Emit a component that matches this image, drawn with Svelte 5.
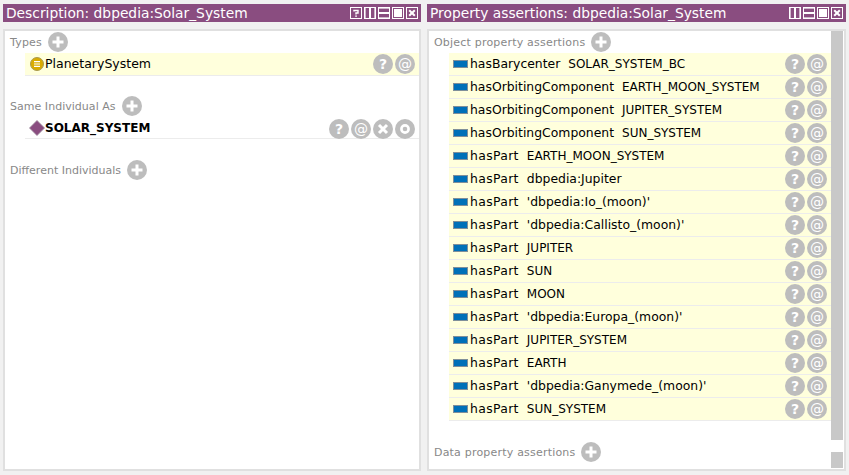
<script lang="ts">
	type Row = { prop: string; value: string };

	const rows: Row[] = [
		{ prop: 'hasBarycenter', value: 'SOLAR_SYSTEM_BC' },
		{ prop: 'hasOrbitingComponent', value: 'EARTH_MOON_SYSTEM' },
		{ prop: 'hasOrbitingComponent', value: 'JUPITER_SYSTEM' },
		{ prop: 'hasOrbitingComponent', value: 'SUN_SYSTEM' },
		{ prop: 'hasPart', value: 'EARTH_MOON_SYSTEM' },
		{ prop: 'hasPart', value: 'dbpedia:Jupiter' },
		{ prop: 'hasPart', value: "'dbpedia:Io_(moon)'" },
		{ prop: 'hasPart', value: "'dbpedia:Callisto_(moon)'" },
		{ prop: 'hasPart', value: 'JUPITER' },
		{ prop: 'hasPart', value: 'SUN' },
		{ prop: 'hasPart', value: 'MOON' },
		{ prop: 'hasPart', value: "'dbpedia:Europa_(moon)'" },
		{ prop: 'hasPart', value: 'JUPITER_SYSTEM' },
		{ prop: 'hasPart', value: 'EARTH' },
		{ prop: 'hasPart', value: "'dbpedia:Ganymede_(moon)'" },
		{ prop: 'hasPart', value: 'SUN_SYSTEM' }
	];

	const isMixed = (v: string) => v.includes('dbpedia');
</script>

{#snippet plus()}
	<span class="btn">
		<svg viewBox="0 0 20 20" width="20" height="20"><path d="M10 4.5v11M4.5 10h11" stroke="#fff" stroke-width="3" /></svg>
	</span>
{/snippet}

{#snippet q()}
	<span class="btn q">?</span>
{/snippet}

{#snippet at()}
	<span class="btn at">@</span>
{/snippet}

{#snippet winBtn(kind: string)}
	<svg class="win" viewBox="0 0 12 12" width="12" height="12">
		<rect x="0.5" y="0.5" width="11" height="11" fill="none" stroke="#fff" />
		{#if kind === 'help'}
			<path d="M4 4.5V3.5h4v2.5H6V7.5" fill="none" stroke="#fff" stroke-width="1.4" />
			<rect x="5.3" y="8.4" width="1.5" height="1.5" fill="#fff" />
		{:else if kind === 'vsplit'}
			<rect x="5" y="1" width="2" height="10" fill="#fff" />
			<rect x="1" y="1" width="1" height="10" fill="#fff" opacity="0.6" />
			<rect x="10" y="1" width="1" height="10" fill="#fff" opacity="0.6" />
		{:else if kind === 'hsplit'}
			<rect x="1" y="5" width="10" height="2" fill="#fff" />
			<rect x="1" y="1" width="10" height="1" fill="#fff" opacity="0.6" />
			<rect x="1" y="10" width="10" height="1" fill="#fff" opacity="0.6" />
		{:else if kind === 'max'}
			<rect x="2" y="2" width="8" height="8" fill="#fff" />
		{:else}
			<path d="M3.2 3.2l5.6 5.6M8.8 3.2l-5.6 5.6" stroke="#fff" stroke-width="2" />
		{/if}
	</svg>
{/snippet}

<div class="page">
	<section class="view desc">
		<header class="title">
			<span class="title-text">Description: dbpedia:Solar_System</span>
			<div class="win-btns">
				{@render winBtn('help')}
				{@render winBtn('vsplit')}
				{@render winBtn('hsplit')}
				{@render winBtn('max')}
				{@render winBtn('close')}
			</div>
		</header>
		<div class="panel left">
			<div class="section-head">Types {@render plus()}</div>
			<div class="row type-row">
				<svg class="class-icon" viewBox="0 0 14 14" width="14" height="14">
					<circle cx="7" cy="7" r="6.5" fill="#d9ab00" stroke="#a89a50" />
					<path d="M4 4.6h6M4 7h6M4 9.4h6" stroke="#fff" stroke-width="1.2" />
				</svg>
				<span class="name type-name">PlanetarySystem</span>
				<div class="actions">{@render q()}{@render at()}</div>
			</div>

			<div class="section-head same">Same Individual As {@render plus()}</div>
			<div class="row same-row">
				<svg class="diamond" viewBox="0 0 16 16" width="16" height="16">
					<path d="M8 .5L15.5 8 8 15.5.5 8z" fill="#8a4d80" stroke="#9b8598" stroke-width="0.8" />
				</svg>
				<span class="name strong">SOLAR_SYSTEM</span>
				<div class="actions">
					{@render q()}{@render at()}
					<span class="btn">
						<svg viewBox="0 0 20 20" width="20" height="20"><path d="M6 6l8 8M14 6l-8 8" stroke="#fff" stroke-width="3" /></svg>
					</span>
					<span class="btn">
						<svg viewBox="0 0 20 20" width="20" height="20"><circle cx="10" cy="10" r="3.6" fill="none" stroke="#fff" stroke-width="2.6" /></svg>
					</span>
				</div>
			</div>

			<div class="section-head different">Different Individuals {@render plus()}</div>
		</div>
	</section>

	<section class="view assertions">
		<header class="title">
			<span class="title-text">Property assertions: dbpedia:Solar_System</span>
			<div class="win-btns">
				{@render winBtn('vsplit')}
				{@render winBtn('hsplit')}
				{@render winBtn('max')}
				{@render winBtn('close')}
			</div>
		</header>
		<div class="panel right">
			<div class="scroll-content">
				<div class="section-head">Object property assertions {@render plus()}</div>
				<div class="list">
					{#each rows as r}
						<div class="row prop-row">
							<span class="prop-icon"></span>
							<span class="name prop" class:short={r.prop === 'hasPart'}>{r.prop}</span>
							<span class="name value" class:mixed={isMixed(r.value)}>{r.value}</span>
							<div class="actions">{@render q()}{@render at()}</div>
						</div>
					{/each}
				</div>
				<div class="section-head data">Data property assertions {@render plus()}</div>
			</div>
			<div class="scrollbar">
				<div class="thumb main"></div>
				<div class="thumb end"></div>
			</div>
		</div>
	</section>
</div>

<style>
	:global(body) {
		margin: 0;
		background: #f1f1f1;
	}

	.page {
		width: 849px;
		height: 475px;
		box-sizing: border-box;
		padding: 4px 3px;
		display: flex;
		gap: 6px;
		font-family: 'DejaVu Sans', sans-serif;
		overflow: hidden;
	}

	.view {
		min-width: 0;
		display: flex;
		flex-direction: column;
		gap: 7px;
	}

	.desc {
		width: 418px;
		flex: none;
	}

	.assertions {
		flex: 1;
	}

	.title {
		height: 18px;
		flex: none;
		background: #8a4d80;
		color: #fff;
		display: flex;
		align-items: center;
		justify-content: space-between;
		padding: 0 3px;
	}

	.title-text {
		font-size: 13.8px;
		line-height: 18px;
	}

	.win-btns {
		display: flex;
		gap: 2px;
	}

	.win {
		display: block;
	}

	.panel {
		flex: 1;
		background: #fff;
		border: 2px solid #e0e0e0;
		box-sizing: border-box;
	}

	.left {
		padding: 0 0 0 5px;
	}

	.right {
		display: flex;
		padding-left: 5px;
	}

	.scroll-content {
		flex: 1;
		min-width: 0;
	}

	.section-head {
		display: flex;
		align-items: center;
		gap: 6px;
		height: 20px;
		padding-top: 1px;
		font-size: 11px;
		letter-spacing: 0.2px;
		color: #888;
	}

	.btn {
		width: 20px;
		height: 20px;
		border-radius: 50%;
		background: #bdbdbd;
		color: #fff;
		display: inline-flex;
		align-items: center;
		justify-content: center;
		flex: none;
		font-size: 14px;
		line-height: 1;
		letter-spacing: 0;
	}

	.btn svg {
		display: block;
	}

	.q {
		font-weight: bold;
	}

	.at {
		font-weight: normal;
		font-size: 14px;
	}

	.row {
		display: flex;
		align-items: center;
		box-sizing: border-box;
		height: 23px;
		border-bottom: 1px solid #ececec;
		font-size: 12px;
		color: #000;
	}

	.name {
		white-space: nowrap;
		line-height: 14px;
	}

	.actions {
		margin-left: auto;
		display: flex;
		gap: 2px;
	}

	.type-row {
		margin: 1px 0 0 15px;
		background: #ffffdc;
		padding: 0 4px 0 5px;
	}

	.type-name {
		font-size: 12.5px;
	}

	.class-icon {
		margin-right: 1px;
	}

	.same {
		margin-top: 19px;
		letter-spacing: 0.03px;
	}

	.same-row {
		height: 22px;
		margin: 1px 0 0 15px;
		padding: 0 4px 0 4px;
	}

	.same-row .actions {
		margin-top: 3px;
	}

	.different {
		margin-top: 20px;
		letter-spacing: 0;
	}

	.strong {
		font-weight: bold;
	}

	.list {
		margin: 1px 0 0 15px;
	}

	.prop-row {
		background: #ffffdc;
		padding: 0 4px 0 4px;
	}

	.prop-icon {
		width: 13px;
		height: 6px;
		background: #0070b8;
		border: 1px solid #7f8f9a;
		margin-right: 2px;
	}

	.prop {
		font-size: 12.4px;
	}

	.short {
		letter-spacing: 0.35px;
	}

	.value {
		margin-left: 8px;
	}

	.mixed {
		font-size: 12.4px;
	}

	.data {
		margin-top: 20px;
	}

	.scrollbar {
		width: 12px;
		flex: none;
		margin-right: 1px;
		display: flex;
		flex-direction: column;
		justify-content: space-between;
	}

	.thumb {
		background: #c8c8c8;
	}

	.main {
		height: 409px;
	}

	.end {
		height: 16px;
		margin-bottom: 1px;
	}
</style>
